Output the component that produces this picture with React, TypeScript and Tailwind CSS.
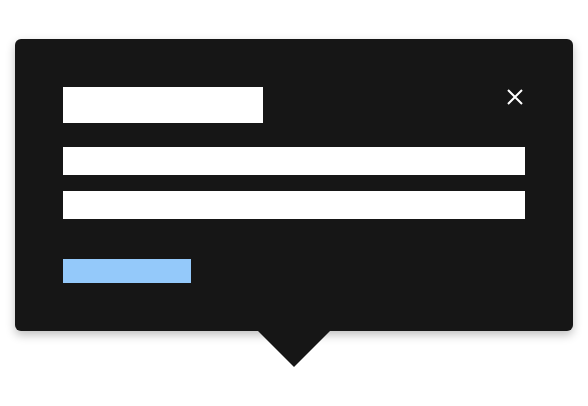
export default function App() {
  return (
    <div className="min-h-[406px] w-[588px] bg-white pt-[39px] px-[15px] font-['Liberation_Sans',sans-serif]">
      <div className="flex flex-col items-center">
        {/* Popover body */}
        <div className="w-[558px] rounded-md bg-[#161616] p-12 shadow-[0_4px_10px_rgba(0,0,0,0.25)]">
          <div className="flex items-start justify-between">
            <div className="h-9 w-[200px] bg-white" />
            <button className="mr-[2px] mt-[2px] flex h-4 w-4 items-center justify-center text-white">
              <svg viewBox="0 0 16 16" className="h-4 w-4" fill="none" stroke="currentColor" strokeWidth={2}>
                <path d="M1 1L15 15M15 1L1 15" />
              </svg>
            </button>
          </div>
          <div className="mt-6 h-7 w-full bg-white" />
          <div className="mt-4 h-7 w-full bg-white" />
          <div className="mt-10 h-6 w-32 bg-[#94c9fa]" />
        </div>
        {/* Caret */}
        <div className="h-0 w-0 border-x-[36px] border-t-[36px] border-x-transparent border-t-[#161616]" />
      </div>
    </div>
  );
}
